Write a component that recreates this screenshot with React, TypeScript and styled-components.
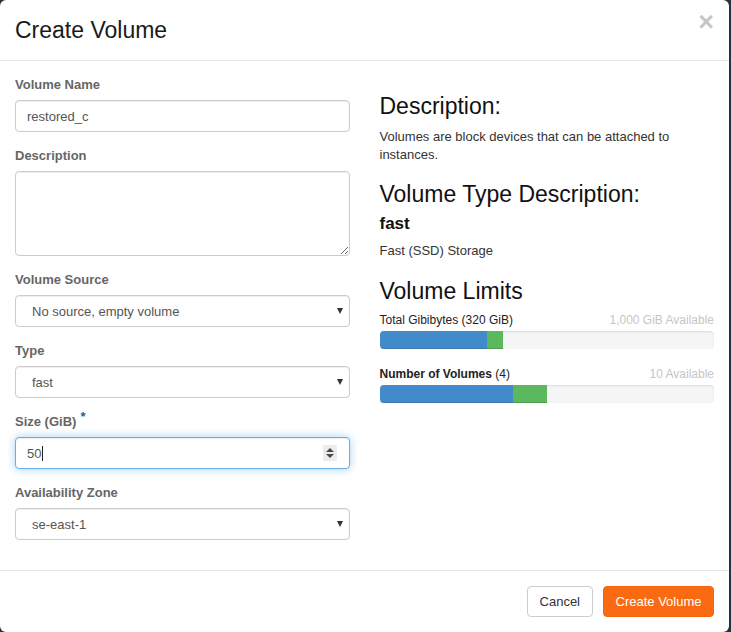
import React from "react";
import styled, { createGlobalStyle } from "styled-components";

const Global = createGlobalStyle`
  html, body {
    margin: 0;
    padding: 0;
    background: #22323f;
    font-family: "Liberation Sans", Arial, Helvetica, sans-serif;
    font-size: 13px;
    color: #333;
  }
  * { box-sizing: border-box; }
`;

const Modal = styled.div`
  width: 729px;
  height: 632px;
  background: #fff;
  border-radius: 6px;
  display: flex;
  flex-direction: column;
  overflow: hidden;
`;

const Header = styled.div`
  display: flex;
  align-items: center;
  justify-content: space-between;
  padding: 15px;
  height: 63px;
  border-bottom: 1px solid #e5e5e5;
`;

const Title = styled.h4`
  margin: 0;
  font-size: 23px;
  font-weight: 400;
  line-height: 30px;
  color: #1a1a1a;
`;

const Close = styled.button`
  align-self: flex-start;
  border: 0;
  background: transparent;
  padding: 0;
  margin-top: -6px;
  font-family: "Liberation Sans", Arial, sans-serif;
  font-size: 27px;
  font-weight: 700;
  line-height: 1;
  color: #000;
  opacity: 0.22;
  cursor: pointer;
`;

const Body = styled.div`
  flex: 1;
  display: grid;
  grid-template-columns: 1fr 1fr;
  column-gap: 30px;
  padding: 15px 15px 15px;
`;

const Column = styled.div`
  display: flex;
  flex-direction: column;
`;

const Group = styled.div`
  display: flex;
  flex-direction: column;
  margin-bottom: 15px;
`;

const Label = styled.label`
  font-size: 13px;
  font-weight: 700;
  color: #666;
  line-height: 18px;
  height: 18px;
  margin-bottom: 6px;
`;

const Req = styled.span`
  position: relative;
  top: -5px;
  color: #245f8d;
  font-size: 13px;
  margin-left: 4px;
`;

const fieldBase = `
  width: 100%;
  border: 1px solid #ccc;
  border-radius: 4px;
  background: #fff;
  box-shadow: inset 0 1px 1px rgba(0,0,0,.075);
  font-family: "Liberation Sans", Arial, sans-serif;
  font-size: 13px;
  color: #555;
`;

const TextInput = styled.input`
  ${fieldBase}
  height: 32px;
  padding: 0 11px;
  outline: none;
`;

const TextArea = styled.textarea`
  ${fieldBase}
  height: 85px;
  padding: 6px 11px;
  resize: vertical;
  outline: none;
  display: block;
`;

const SelectBox = styled.div`
  ${fieldBase}
  height: 32px;
  padding: 0 6px 0 16px;
  display: flex;
  align-items: center;
  justify-content: space-between;
`;

const Arrow = styled.span`
  width: 0;
  height: 0;
  border-left: 3.5px solid transparent;
  border-right: 3.5px solid transparent;
  border-top: 6px solid #333;
`;

const FocusBox = styled.div`
  ${fieldBase}
  height: 32px;
  padding: 0 12px 0 11px;
  display: flex;
  align-items: center;
  border-color: #66afe9;
  box-shadow: inset 0 1px 1px rgba(0,0,0,.075), 0 0 8px rgba(102,175,233,.6);
`;

const Value = styled.span`
  color: #555;
`;

const Caret = styled.span`
  display: inline-block;
  width: 1px;
  height: 15px;
  background: #222;
  margin-left: 1px;
`;

const Spinner = styled.span`
  margin-left: auto;
  width: 14px;
  height: 16px;
  background: #ececec;
  display: flex;
  align-items: center;
  justify-content: center;
`;

const Heading = styled.h3<{ $mt: number }>`
  margin: ${(p) => p.$mt}px 0 0;
  font-size: 23px;
  font-weight: 400;
  line-height: 26px;
  color: #111;
`;

const Para = styled.p<{ $mt: number }>`
  margin: ${(p) => p.$mt}px 0 0;
  font-size: 13px;
  line-height: 18px;
  color: #333;
`;

const TypeName = styled.div`
  margin-top: 7px;
  font-size: 17px;
  font-weight: 700;
  line-height: 20px;
  color: #111;
`;

const QuotaHead = styled.div<{ $mt: number }>`
  margin-top: ${(p) => p.$mt}px;
  display: flex;
  justify-content: space-between;
  font-size: 12px;
  line-height: 18px;
  color: #333;
`;

const QuotaName = styled.span`
  color: #222;
  strong { font-weight: 700; }
`;

const Available = styled.span`
  color: #c6c6c6;
`;

const Progress = styled.div`
  margin-top: 2px;
  height: 18px;
  border-radius: 4px;
  background: #f5f5f5;
  box-shadow: inset 0 1px 2px rgba(0,0,0,.1);
  display: flex;
  overflow: hidden;
`;

const Segment = styled.div<{ $color: string; $pct: number }>`
  width: ${(p) => p.$pct}%;
  height: 100%;
  background: ${(p) => p.$color};
  box-shadow: inset 0 -1px 0 rgba(0,0,0,.15);
`;

const Footer = styled.div`
  border-top: 1px solid #e5e5e5;
  padding: 15px;
  display: flex;
  justify-content: flex-end;
  gap: 10px;
`;

const Button = styled.button<{ $primary?: boolean }>`
  height: 31px;
  padding: 0 ${(p) => (p.$primary ? 11.5 : 12)}px;
  border-radius: 4px;
  font-family: "Liberation Sans", Arial, sans-serif;
  font-size: 13px;
  border: 1px solid ${(p) => (p.$primary ? "#f4640c" : "#ccc")};
  background: ${(p) => (p.$primary ? "#f96a12" : "#fff")};
  color: ${(p) => (p.$primary ? "#fff" : "#333")};
  cursor: pointer;
`;

function Select({ value }: { value: string }) {
  return (
    <SelectBox>
      <span>{value}</span>
      <Arrow />
    </SelectBox>
  );
}

export default function App() {
  return (
    <>
      <Global />
      <Modal>
        <Header>
          <Title>Create Volume</Title>
          <Close aria-label="Close">×</Close>
        </Header>
        <Body>
          <Column>
            <Group>
              <Label>Volume Name</Label>
              <TextInput defaultValue="restored_c" />
            </Group>
            <Group>
              <Label>Description</Label>
              <TextArea />
            </Group>
            <Group>
              <Label>Volume Source</Label>
              <Select value="No source, empty volume" />
            </Group>
            <Group>
              <Label>Type</Label>
              <Select value="fast" />
            </Group>
            <Group>
              <Label>
                Size (GiB)<Req>*</Req>
              </Label>
              <FocusBox>
                <Value>50</Value>
                <Caret />
                <Spinner>
                  <svg width="10" height="12" viewBox="0 0 10 12">
                    <path d="M5 1 L9 5 L1 5 Z" fill="#4a4a4a" />
                    <path d="M1 7 L9 7 L5 11 Z" fill="#4a4a4a" />
                  </svg>
                </Spinner>
              </FocusBox>
            </Group>
            <Group>
              <Label>Availability Zone</Label>
              <Select value="se-east-1" />
            </Group>
          </Column>
          <Column>
            <Heading $mt={17}>Description:</Heading>
            <Para $mt={9}>
              Volumes are block devices that can be attached to instances.
            </Para>
            <Heading $mt={17}>Volume Type Description:</Heading>
            <TypeName>fast</TypeName>
            <Para $mt={8}>Fast (SSD) Storage</Para>
            <Heading $mt={18}>Volume Limits</Heading>
            <QuotaHead $mt={7}>
              <QuotaName>Total Gibibytes (320 GiB)</QuotaName>
              <Available>1,000 GiB Available</Available>
            </QuotaHead>
            <Progress>
              <Segment $color="#428bca" $pct={32} />
              <Segment $color="#5cb85c" $pct={5} />
            </Progress>
            <QuotaHead $mt={16}>
              <QuotaName>
                <strong>Number of Volumes</strong> (4)
              </QuotaName>
              <Available>10 Available</Available>
            </QuotaHead>
            <Progress>
              <Segment $color="#428bca" $pct={40} />
              <Segment $color="#5cb85c" $pct={10} />
            </Progress>
          </Column>
        </Body>
        <Footer>
          <Button>Cancel</Button>
          <Button $primary>Create Volume</Button>
        </Footer>
      </Modal>
    </>
  );
}
